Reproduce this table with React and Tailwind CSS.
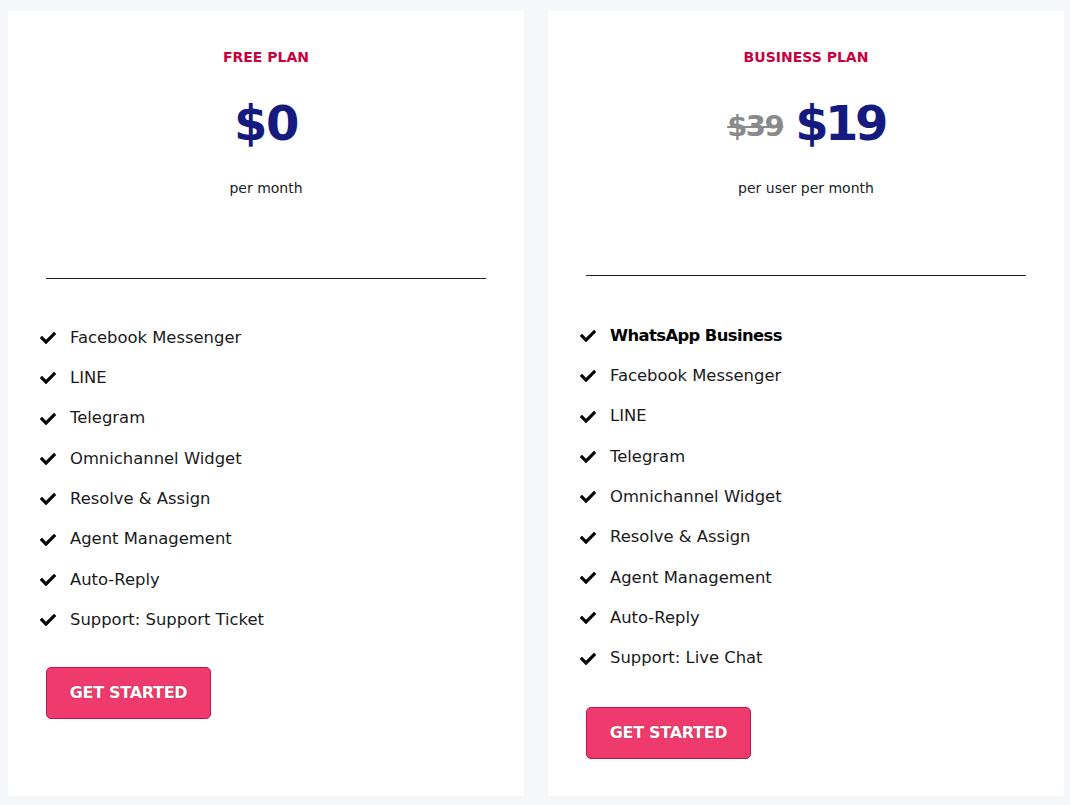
import React from "react";
import { FaCheck } from "react-icons/fa";

const freeFeatures = [
  "Facebook Messenger",
  "LINE",
  "Telegram",
  "Omnichannel Widget",
  "Resolve & Assign",
  "Agent Management",
  "Auto-Reply",
  "Support: Support Ticket",
];

const businessFeatures = [
  { label: "WhatsApp Business", bold: true },
  { label: "Facebook Messenger" },
  { label: "LINE" },
  { label: "Telegram" },
  { label: "Omnichannel Widget" },
  { label: "Resolve & Assign" },
  { label: "Agent Management" },
  { label: "Auto-Reply" },
  { label: "Support: Live Chat" },
];

const Feature = ({ label, bold }) => (
  <li className="flex items-center h-[40.3px]">
    <FaCheck className="w-[16px] h-[16px] text-black mr-[14px] shrink-0" />
    <span className={bold ? "font-bold text-black tracking-[-0.6px]" : "text-[#1a1a1a]"}>{label}</span>
  </li>
);

const GetStarted = () => (
  <button className="w-[165px] h-[52px] rounded-[5px] bg-[#ee3a6c] border border-[#c8124c] text-white font-bold text-[16px] uppercase tracking-[-0.3px] [text-shadow:0_0_1px_rgba(120,0,30,0.6)]">
    Get Started
  </button>
);

export default function App() {
  return (
    <div
      className="w-[1070px] h-[805px] bg-[#f6f7fa] pl-[8px] pt-[11px] flex gap-[24px] text-[16.4px]"
      style={{ fontFamily: '"DejaVu Sans", "Liberation Sans", sans-serif' }}
    >
      {/* Free plan */}
      <div className="w-[516px] h-[785px] shrink-0 bg-white pt-[36px] px-[38px]">
        <div className="flex flex-col items-center">
          <h3 className="text-[14px] leading-[20px] font-bold text-[#c8003f]">FREE PLAN</h3>
          <div className="mt-[30px] h-[52px] flex items-center text-[48px] leading-none font-bold text-[#141a7e] tracking-[-1.5px]">$0</div>
          <p className="mt-[29px] text-[14px] leading-[20px] text-[#222]">per month</p>
        </div>
        <div className="mt-[80px] h-[1px] bg-[#222]" />
        <ul className="mt-[39px] -ml-[6px]">
          {freeFeatures.map((f) => (
            <Feature key={f} label={f} />
          ))}
        </ul>
        <div className="mt-[27px]">
          <GetStarted />
        </div>
      </div>

      {/* Business plan */}
      <div className="w-[516px] h-[785px] shrink-0 bg-white pt-[36px] px-[38px]">
        <div className="flex flex-col items-center">
          <h3 className="text-[14px] leading-[20px] font-bold text-[#c8003f]">BUSINESS PLAN</h3>
          <div className="mt-[30px] h-[52px] flex items-center gap-[12px] leading-none">
            <span className="text-[29px] mt-[6px] font-bold text-[#8a8a8a] line-through tracking-[-1.5px]">$39</span>
            <span className="text-[48px] font-bold text-[#141a7e] tracking-[-3.5px]">$19</span>
          </div>
          <p className="mt-[29px] text-[14px] leading-[20px] text-[#222]">per user per month</p>
        </div>
        <div className="mt-[77px] h-[1px] bg-[#222]" />
        <ul className="mt-[40px] -ml-[6px]">
          {businessFeatures.map((f) => (
            <Feature key={f.label} label={f.label} bold={f.bold} />
          ))}
        </ul>
        <div className="mt-[28px]">
          <GetStarted />
        </div>
      </div>
    </div>
  );
}
